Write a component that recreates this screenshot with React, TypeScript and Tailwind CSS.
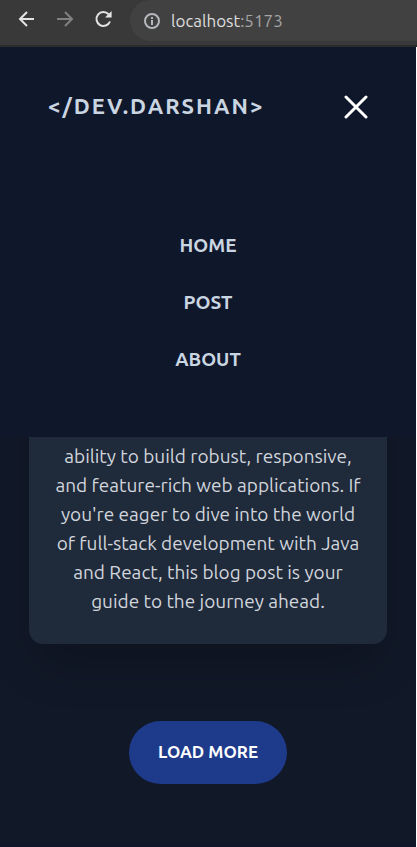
import React from "react";

const links = ["HOME", "POST", "ABOUT"];

function BrowserBar() {
  return (
    <div className="flex h-[47px] items-start border-b-2 border-[#2b2b2b] bg-[#393939] text-[#e3e3e3]">
      <div className="flex h-[38px] shrink-0 items-center gap-[14px] pl-4">
        <button type="button" aria-label="Back" className="size-6">
          <svg viewBox="0 0 24 24" className="size-6" fill="none" stroke="currentColor" strokeWidth="2">
            <path d="M18 12H4M11 5l-7 7 7 7" />
          </svg>
        </button>
        <button type="button" aria-label="Forward" className="size-6 text-[#818181]">
          <svg viewBox="0 0 24 24" className="size-6" fill="none" stroke="currentColor" strokeWidth="2">
            <path d="M3 12h15M11 5l7 7-7 7" />
          </svg>
        </button>
        <button type="button" aria-label="Reload" className="size-6">
          <svg viewBox="0 0 24 24" className="size-6" fill="none" stroke="currentColor" strokeWidth="2">
            <path d="M16.6 7.2A7 7 0 1 0 18 14.5" />
            <path d="M19.6 4v6.6H13z" fill="currentColor" stroke="none" />
          </svg>
        </button>
      </div>
      <div className="ml-[14px] flex h-[41px] flex-1 items-center gap-[11px] rounded-l-full bg-[#414141] pl-[14px]">
        <svg viewBox="0 0 16 16" className="size-4 shrink-0 text-[#b4b7bb]" fill="none" stroke="currentColor" strokeWidth="2">
          <circle cx="8" cy="8" r="7" />
          <path d="M8 7v5M8 4v2" />
        </svg>
        <p className="text-[17px] leading-6 text-[#dedede]">
          localhost<span className="text-[#a5a5a5]">:5173</span>
        </p>
      </div>
    </div>
  );
}

function Menu() {
  return (
    <header className="absolute inset-x-0 top-0 z-10 h-[390px] bg-[#0f172a] text-slate-300">
      <div className="flex h-[116px] items-center justify-between px-12">
        <a href="#home" className="text-[22px] font-bold tracking-[2px]">
          {"</DEV.DARSHAN>"}
        </a>
        <button type="button" aria-label="Close menu" className="text-white">
          <svg viewBox="0 0 24 28" className="h-7 w-6" fill="none" stroke="currentColor" strokeWidth="3" strokeLinecap="round">
            <path d="M2 6l20 20M22 6L2 26" />
          </svg>
        </button>
      </div>
      <nav className="flex flex-col items-center gap-[29px] pt-[68px]">
        {links.map((link) => (
          <a key={link} href={"#" + link.toLowerCase()} className="text-[19px] leading-7 font-bold">
            {link}
          </a>
        ))}
      </nav>
    </header>
  );
}

export default function App() {
  return (
    <div className="min-h-screen bg-[#111827] font-['Ubuntu','Noto_Sans',sans-serif]">
      <BrowserBar />
      <div className="relative overflow-hidden border-r border-white">
        <Menu />
        <main className="flex flex-col items-center border-b-2 border-[#0f172a] px-[29px] pt-[338px] pb-[61px]">
          <article className="w-full rounded-[14px] bg-[#1f2a3b] px-[21px] py-7 text-center text-[19px] leading-[29px] text-gray-300 shadow-2xl">
            <p>
              popularity in the tech industry and ability to build robust, responsive, and feature-rich web
              applications. If you're eager to dive into the world of full-stack development with Java and
              React, this blog post is your guide to the journey ahead.
            </p>
          </article>
          <button
            type="button"
            className="mt-[77px] h-[63px] rounded-full bg-[#1e3a8a] px-[29px] pb-[2px] text-[17px] font-bold text-white"
          >
            LOAD MORE
          </button>
        </main>
      </div>
    </div>
  );
}
